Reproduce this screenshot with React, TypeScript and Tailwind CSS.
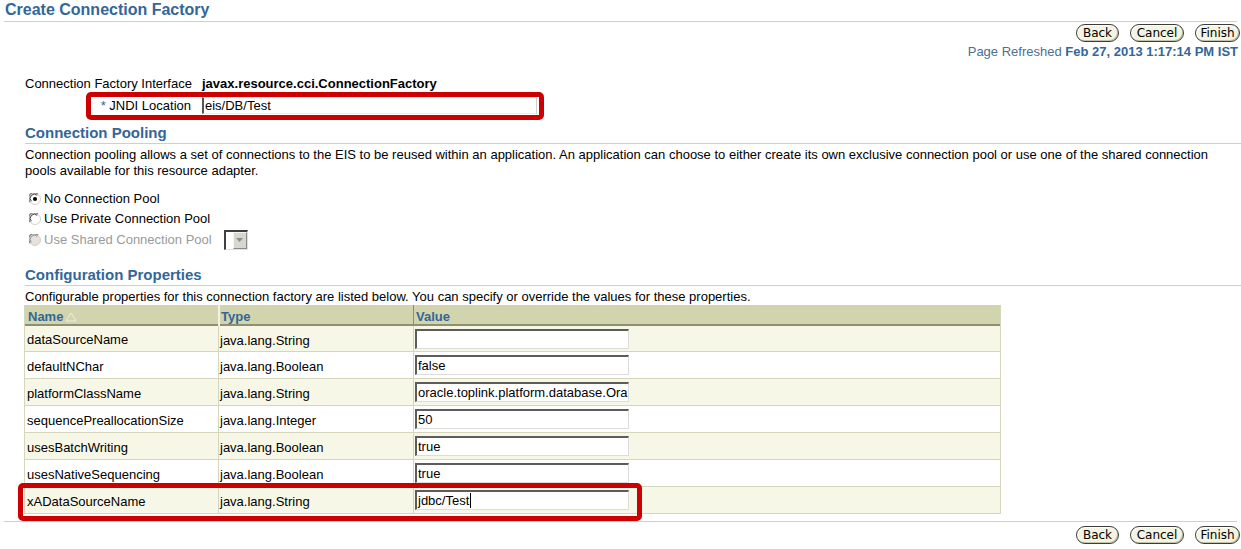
import React from "react";

const F = "font-['Liberation_Sans',Arial,sans-serif]";

function Btn({ label, w }: { label: string; w: string }) {
  return (
    <div
      className={`${w} h-[18px] flex items-center justify-center rounded-[9px] border border-[#3c3c3c] bg-[#f4f4e2] text-[12px] leading-none text-black font-['DejaVu_Sans',sans-serif] shadow-[inset_-1px_-1px_0_#c4c4aa,inset_1px_1px_0_#ffffff]`}
    >
      {label}
    </div>
  );
}

function Buttons() {
  return (
    <div className="flex justify-end gap-[11px] pr-[1px] h-[18px]">
      <Btn label="Back" w="w-[43px]" />
      <Btn label="Cancel" w="w-[54px]" />
      <Btn label="Finish" w="w-[45px]" />
    </div>
  );
}

function Radio({ checked, disabled }: { checked?: boolean; disabled?: boolean }) {
  return (
    <svg width="12" height="12" viewBox="0 0 12 12" className="shrink-0">
      <circle cx="6" cy="6" r="5.5" fill={disabled ? "#e4e2dc" : "#ffffff"} stroke="#d4d0c8" />
      <path d="M1.2 9 A5 5 0 0 1 9 1.2" fill="none" stroke="#808080" strokeWidth="1.2" />
      <path d="M2.4 8.2 A4 4 0 0 1 8.2 2.4" fill="none" stroke={disabled ? "#909090" : "#404040"} strokeWidth="1" />
      {checked && <circle cx="6" cy="6" r="2" fill="#000" />}
    </svg>
  );
}

function Heading({ children }: { children: React.ReactNode }) {
  return (
    <div className="ml-[25px] h-[20px] border-b border-[#d3d3b2] text-[15px] leading-[18px] font-bold text-[#336699]">
      {children}
    </div>
  );
}

function Field({ value, cursor }: { value: string; cursor?: boolean }) {
  return (
    <div className="w-[214px] h-[20px] bg-white border-t-2 border-l-2 border-t-[#5c5c5c] border-l-[#5c5c5c] border-b border-r border-b-[#dcdcdc] border-r-[#dcdcdc] text-[13px] leading-[17px] pl-[1px] text-black whitespace-nowrap overflow-hidden flex items-center">
      <span>{value}</span>
      {cursor && <span className="inline-block w-[1px] h-[15px] bg-black ml-[1px]" />}
    </div>
  );
}

const rows: [string, string, string][] = [
  ["dataSourceName", "java.lang.String", ""],
  ["defaultNChar", "java.lang.Boolean", "false"],
  ["platformClassName", "java.lang.String", "oracle.toplink.platform.database.Ora"],
  ["sequencePreallocationSize", "java.lang.Integer", "50"],
  ["usesBatchWriting", "java.lang.Boolean", "true"],
  ["usesNativeSequencing", "java.lang.Boolean", "true"],
  ["xADataSourceName", "java.lang.String", "jdbc/Test"],
];

export default function App() {
  return (
    <div className={`relative w-[1241px] h-[549px] bg-white overflow-hidden flex flex-col text-black ${F}`}>
      {/* Title */}
      <div className="mx-[4px] h-[22px] border-b border-[#d3d3b2] pl-[1px] text-[16px] leading-[20px] font-bold text-[#336699]">
        Create Connection Factory
      </div>

      <div className="mt-[2px]">
        <Buttons />
      </div>

      <div className="mt-[2px] h-[16px] text-right pr-[3px] text-[13px] leading-[16px] text-[#4d6f91]">
        Page Refreshed <span className="font-bold text-[#336699]">Feb 27, 2013 1:17:14 PM IST</span>
      </div>

      {/* Interface / JNDI */}
      <div className="mt-[16px] ml-[25px] grid grid-cols-[166px_auto] gap-x-[11px] text-[13px] whitespace-nowrap">
        <div className="h-[16px] leading-[16px] text-right">Connection Factory Interface</div>
        <div className="h-[16px] leading-[16px] font-bold">javax.resource.cci.ConnectionFactory</div>
        <div className="mt-[5px] h-[17px] leading-[17px] text-right">
          <span className="text-[#336699]">*</span> JNDI Location
        </div>
        <div className="mt-[5px] h-[17px] w-[335px] bg-white border-l-2 border-l-[#555555] border-t border-t-[#e6e6e6] border-r border-r-[#cfcfcf] border-b border-b-[#eeeeee] leading-[15px] pl-[1px]">
          eis/DB/Test
        </div>
      </div>

      {/* Connection Pooling */}
      <div className="mt-[10px]">
        <Heading>Connection Pooling</Heading>
      </div>
      <div className="mt-[3px] ml-[25px] text-[13px] leading-[16px]">
        Connection pooling allows a set of connections to the EIS to be reused within an application. An application can choose to either create its own exclusive connection pool or use one of the shared connection
        <br />
        pools available for this resource adapter.
      </div>

      <div className="mt-[10px] ml-[29px] flex flex-col text-[13px]">
        <div className="h-[20px] flex items-center gap-[3px]">
          <Radio checked />
          <span>No Connection Pool</span>
        </div>
        <div className="h-[20px] flex items-center gap-[3px]">
          <Radio />
          <span>Use Private Connection Pool</span>
        </div>
        <div className="h-[21px] flex items-center gap-[3px]">
          <Radio disabled />
          <span className="text-[#9a9a9a]">Use Shared Connection Pool</span>
          <div className="ml-[9px] w-[24px] h-[20px] flex border-t-2 border-l-2 border-t-[#404040] border-l-[#404040] border-b border-r border-b-[#e0e0e0] border-r-[#e0e0e0] bg-white">
            <div className="w-[7px]" />
            <div className="flex-1 bg-[#d8d6cf] border border-[#f4f4f4] border-r-[#8a8a8a] border-b-[#8a8a8a] flex items-center justify-center">
              <svg width="7" height="4" viewBox="0 0 7 4">
                <path d="M0 0 H7 L3.5 4 Z" fill="#8c8c8c" />
              </svg>
            </div>
          </div>
        </div>
      </div>

      {/* Configuration Properties */}
      <div className="mt-[16px]">
        <Heading>Configuration Properties</Heading>
      </div>
      <div className="mt-[3px] ml-[25px] h-[16px] text-[13px] leading-[16px]">
        Configurable properties for this connection factory are listed below. You can specify or override the values for these properties.
      </div>

      <div className="ml-[24px] w-[977px] text-[13px] border-l border-r border-[#d6d6bc]">
        <div className="grid grid-cols-[194px_195px_586px] h-[21px] bg-[#d1d4ac] border-b-2 border-b-[#8f9070] font-bold text-[#336699]">
          <div className="pl-[3px] pt-[2px] flex items-center gap-[2px] border-r border-r-[#f2f2e4]">
            Name
            <svg width="12" height="10" viewBox="0 0 12 10">
              <path d="M6 1 L11 9 H1 Z" fill="none" stroke="#eeeee0" strokeWidth="1" />
            </svg>
          </div>
          <div className="pl-[2px] pt-[2px] flex items-center border-r border-r-[#8f9070] shadow-[inset_1px_0_0_#f2f2e4]">Type</div>
          <div className="pl-[2px] pt-[2px] flex items-center">Value</div>
        </div>
        {rows.map((r, i) => (
          <div
            key={r[0]}
            className={`grid grid-cols-[194px_195px_586px] ${i === 0 ? "h-[26px]" : "h-[27px]"} border-b border-[#d6d6bc] ${i % 2 === 0 ? "bg-[#f7f7e7]" : "bg-white"}`}
          >
            <div className="pl-[2px] pt-[3px] flex items-center border-r border-[#d6d6bc]">{r[0]}</div>
            <div className="pl-[1px] pt-[4px] flex items-center border-r border-[#d6d6bc]">{r[1]}</div>
            <div className="pl-[1px] flex items-center">
              <Field value={r[2]} cursor={i === 6} />
            </div>
          </div>
        ))}
      </div>

      <div className="mt-[7px] mx-[4px] border-t border-[#d3d3b2]" />
      <div className="mt-[4px]">
        <Buttons />
      </div>

      {/* Red annotation boxes */}
      <div className="absolute left-[86px] top-[92px] w-[458px] h-[28px] border-[5px] border-[#cc0000] rounded-[5px]" />
      <div className="absolute left-[18px] top-[483px] w-[624px] h-[38px] border-[5px] border-[#cc0000] rounded-[5px]" />
    </div>
  );
}
